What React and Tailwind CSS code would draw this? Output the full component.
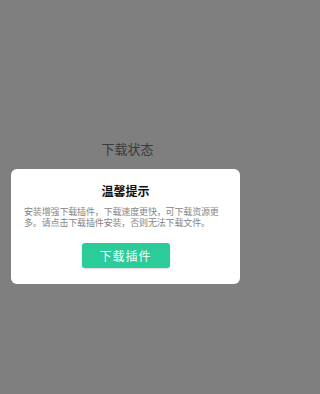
import React from 'react';

const App = () => {
  return (
    <div
      className="w-full min-h-[394px] bg-[#7f7f7f] overflow-hidden"
      style={{ fontFamily: '"Noto Sans CJK SC", "Noto Sans", sans-serif' }}
    >
      <div className="w-[255px] h-[394px] flex flex-col">
        <div className="mt-[139px] h-[20px] text-center text-[13px] leading-[20px] text-[#3a3a3a]">下载状态</div>

        {/* dialog */}
        <div className="mt-[10px] ml-[11px] w-[229px] h-[115px] bg-white rounded-[6px] px-[13px] pt-[14px] flex flex-col items-center">
          <div className="text-[12px] leading-[16px] font-bold text-[#111111]">温馨提示</div>
          <p
            className="mt-[8px] w-full text-[9px] leading-[11px] tracking-[-0.15px] text-[#858585] text-left whitespace-nowrap"
            style={{ fontFamily: '"Liberation Sans", "Noto Sans CJK SC", sans-serif' }}
          >
            安装增强下载插件，下载速度更快，可下载资源更
            <br />
            多。请点击下载插件安装，否则无法下载文件。
          </p>
          <button className="mt-[14px] w-[88px] h-[25px] rounded-[3px] bg-[#2ccb9a] text-white text-[12px] leading-[25px] tracking-[1px] shadow-[0_1px_2px_rgba(0,0,0,0.15)]">
            下载插件
          </button>
        </div>
      </div>
    </div>
  );
};

export default App;
